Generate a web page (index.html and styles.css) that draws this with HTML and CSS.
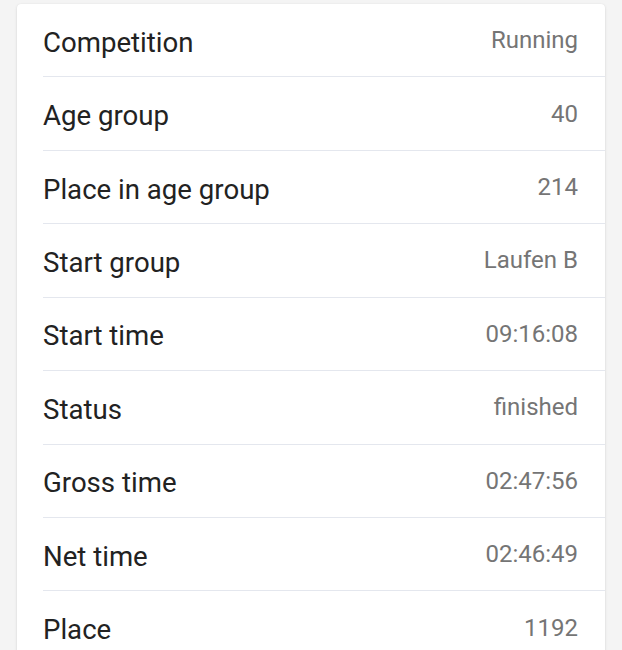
FILE: index.html
```html
<!DOCTYPE html>
<html lang="en">
<head>
<meta charset="UTF-8">
<title>Result details</title>
<link rel="stylesheet" href="styles.css">
</head>
<body>
	<div class="card">
		<ul class="details">
			<li><span class="label">Competition</span><span class="value">Running</span></li>
			<li><span class="label">Age group</span><span class="value">40</span></li>
			<li><span class="label">Place in age group</span><span class="value">214</span></li>
			<li><span class="label">Start group</span><span class="value">Laufen B</span></li>
			<li><span class="label">Start time</span><span class="value">09:16:08</span></li>
			<li><span class="label">Status</span><span class="value">finished</span></li>
			<li><span class="label">Gross time</span><span class="value">02:47:56</span></li>
			<li><span class="label">Net time</span><span class="value">02:46:49</span></li>
			<li><span class="label">Place</span><span class="value">1192</span></li>
		</ul>
	</div>
</body>
</html>
```
FILE: styles.css
```css
*{margin: 0;padding: 0;list-style: none;box-sizing: border-box;}
body{
	background: #f4f4f4;
	font-family: Roboto, "Liberation Sans", sans-serif;
	padding: 4px 17px 0 17px;
	overflow: hidden;
}
.card{
	background: #fff;
	border-radius: 4px 4px 0 0;
	box-shadow: 0 1px 3px rgba(0,0,0,0.12), 0 0 1px rgba(0,0,0,0.08);
	height: 700px;
}
.details li{
	display: flex;
	justify-content: space-between;
	align-items: center;
	height: 73.43px;
	margin-left: 26px;
	padding: 4px 27px 0 0;
	border-bottom: 1px solid #e4e7ee;
}
.details .label{
	font-size: 27.6px;
	color: #222;
}
.details .value{
	font-size: 24px;
	color: #757575;
	margin-bottom: 4px;
}
```
